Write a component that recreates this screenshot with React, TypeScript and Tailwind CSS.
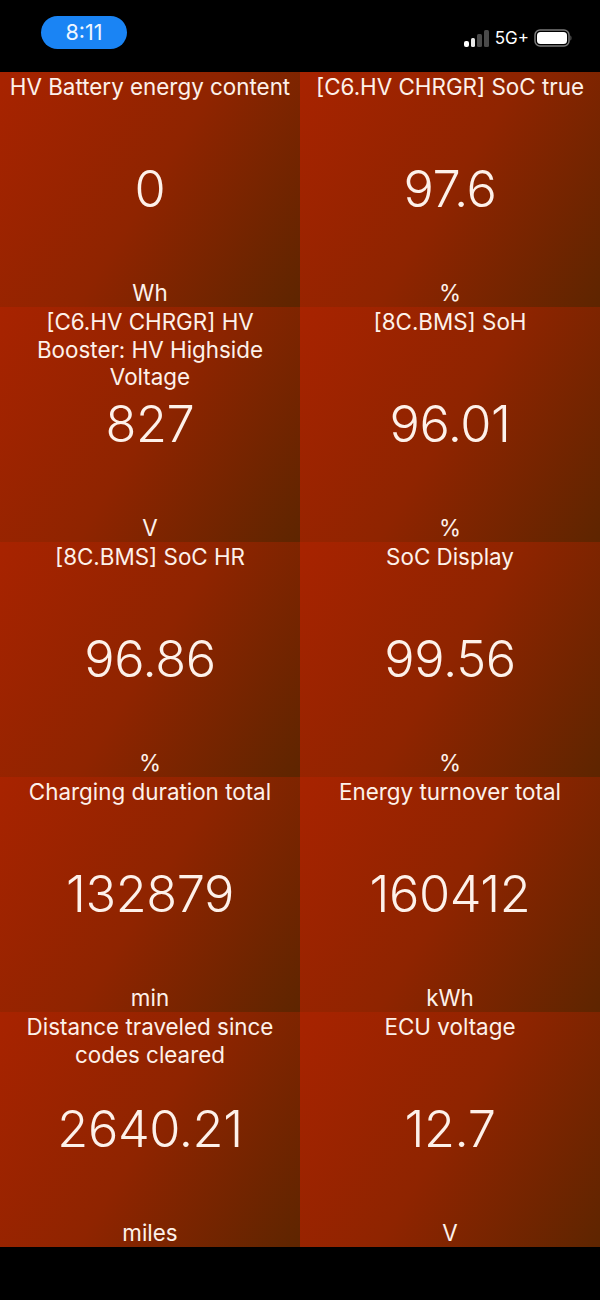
const cells = [
  { title: "HV Battery energy content", value: "0", unit: "Wh" },
  { title: "[C6.HV CHRGR] SoC true", value: "97.6", unit: "%" },
  { title: "[C6.HV CHRGR] HV Booster: HV Highside Voltage", value: "827", unit: "V" },
  { title: "[8C.BMS] SoH", value: "96.01", unit: "%" },
  { title: "[8C.BMS] SoC HR", value: "96.86", unit: "%" },
  { title: "SoC Display", value: "99.56", unit: "%" },
  { title: "Charging duration total", value: "132879", unit: "min" },
  { title: "Energy turnover total", value: "160412", unit: "kWh" },
  { title: "Distance traveled since codes cleared", value: "2640.21", unit: "miles" },
  { title: "ECU voltage", value: "12.7", unit: "V" },
];

const StatusBar = () => (
  <div className="h-[72px] flex items-start justify-between bg-black pl-[41px] pr-[28px]">
    <div className="mt-4 w-[86px] h-[33px] rounded-full bg-[#1a84f4] flex items-center justify-center text-[21.5px] text-[#eef6ff]">
      8:11
    </div>
    <div className="mt-[27px] flex items-center">
      <svg width="27" height="20" viewBox="0 0 27 20" className="mr-[5px]">
        <rect x="1" y="13" width="5" height="6" rx="2" fill="#fff" />
        <rect x="8" y="10" width="4" height="9" rx="1.5" fill="#e8e8e8" />
        <rect x="14" y="6" width="5" height="13" rx="1.5" fill="#4a4a4a" />
        <rect x="21" y="2" width="5" height="17" rx="1.5" fill="#4a4a4a" />
      </svg>
      <span className="text-[17px] leading-[22px] text-white mr-[5px]">5G+</span>
      <svg width="38" height="20" viewBox="0 0 38 20">
        <rect x="1" y="2" width="34" height="16" rx="5" fill="none" stroke="#7a7a7a" strokeWidth="1.5" />
        <rect x="3" y="4" width="30" height="12" rx="3.5" fill="#fff" />
        <path d="M36.5 7.5c1.2.5 1.2 4.5 0 5z" fill="#7a7a7a" />
      </svg>
    </div>
  </div>
);

const Cell = ({ title, value, unit }: { title: string; value: string; unit: string }) => (
  <div className="h-[235px] grid grid-rows-[1fr_auto_1fr] justify-items-center text-center text-[#fdf1ea] bg-linear-[122deg] from-[#a82300] via-[#8f2400] via-50% to-[#5e2500] px-[5px]">
    <div className="text-[22.4px] leading-[27.5px] pt-[1px] w-full self-start">{title}</div>
    <div className="text-[50.5px] leading-[60px] font-[350] tracking-[-0.4px] -mt-[1px]">{value}</div>
    <div className="text-[22.4px] leading-[28px] self-end">{unit}</div>
  </div>
);

export default function App() {
  return (
    <div className="w-[600px] h-[1300px] bg-black overflow-hidden font-['Inter',sans-serif]">
      <StatusBar />
      <div className="grid grid-cols-2">
        {cells.map((c) => (
          <Cell key={c.title} {...c} />
        ))}
      </div>
    </div>
  );
}
